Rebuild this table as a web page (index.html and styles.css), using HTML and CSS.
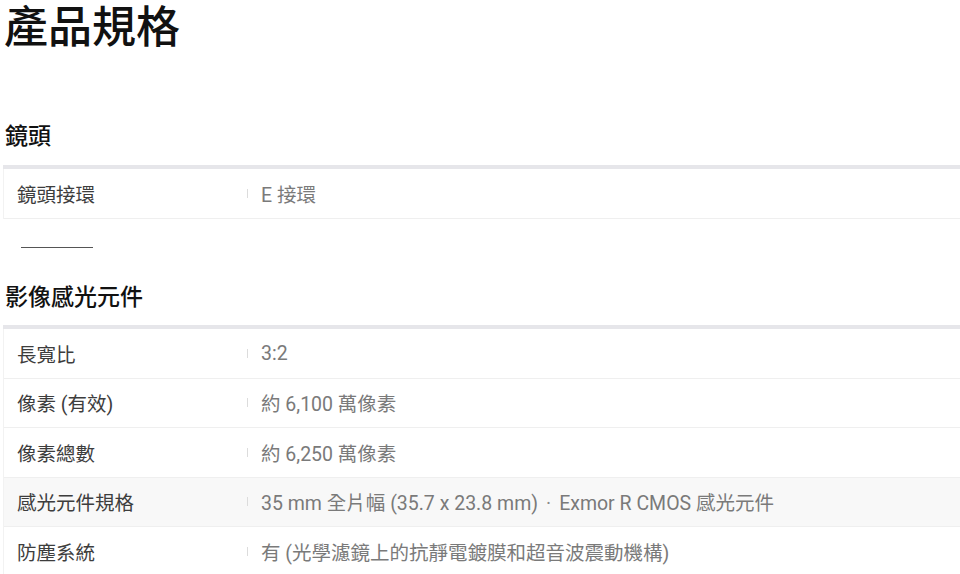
FILE: index.html
```html
<!DOCTYPE html>
<html lang="zh-Hant">
<head>
<meta charset="utf-8">
<title>產品規格</title>
<link rel="stylesheet" href="styles.css">
</head>
<body>
<div class="page">
  <h1 class="title">產品規格</h1>

  <h2 class="section-head first">鏡頭</h2>
  <div class="bar"></div>
  <div class="table">
    <div class="row"><div class="label">鏡頭接環</div><div class="sep"></div><div class="value">E 接環</div></div>
  </div>

  <div class="divider"></div>

  <h2 class="section-head">影像感光元件</h2>
  <div class="bar"></div>
  <div class="table">
    <div class="row"><div class="label">長寬比</div><div class="sep"></div><div class="value">3:2</div></div>
    <div class="row"><div class="label">像素 (有效)</div><div class="sep"></div><div class="value">約 6,100 萬像素</div></div>
    <div class="row"><div class="label">像素總數</div><div class="sep"></div><div class="value">約 6,250 萬像素</div></div>
    <div class="row shaded"><div class="label">感光元件規格</div><div class="sep"></div><div class="value">35 mm 全片幅 (35.7 x 23.8 mm)<span class="dot">·</span>Exmor R CMOS 感光元件</div></div>
    <div class="row"><div class="label">防塵系統</div><div class="sep"></div><div class="value">有 (光學濾鏡上的抗靜電鍍膜和超音波震動機構)</div></div>
  </div>
</div>
</body>
</html>
```
FILE: styles.css
```css
html, body {
  margin: 0;
  padding: 0;
  background: #ffffff;
}
body {
  font-family: Roboto, "Noto Sans CJK TC", "Noto Sans", sans-serif;
  color: #222;
  overflow: hidden;
}
.page {
  padding-left: 3px;
  width: 980px;
}
.title {
  margin: 0;
  padding-left: 1px;
  font-size: 44px;
  line-height: 56px;
  font-weight: 500;
  color: #111;
}
.section-head {
  margin: 35px 0 12px 0;
  padding-left: 2px;
  font-size: 23px;
  line-height: 30px;
  font-weight: 500;
  color: #111;
}
.section-head.first {
  margin-top: 66px;
  margin-bottom: 13px;
}
.bar {
  height: 4px;
  background: #e6e6ea;
}
.table {
  border-left: 1px solid #f2f2f2;
}
.row {
  display: flex;
  align-items: center;
  height: 48.5px;
  border-bottom: 1px solid #efefef;
  font-size: 19.5px;
}
.row.shaded {
  background: #f8f8f8;
}
.label {
  width: 230px;
  padding-left: 13px;
  color: #3d3d3d;
  flex: none;
}
.sep {
  width: 1px;
  height: 9px;
  background: #dcdcdc;
  flex: none;
}
.value {
  margin-left: 13px;
  color: #7a7a7a;
  white-space: nowrap;
}
.dot {
  display: inline-block;
  padding: 0 8px;
  color: #8a8a8a;
}
.divider {
  margin: 28px 0 0 18px;
  width: 72px;
  height: 1.5px;
  background: #555;
}
```
